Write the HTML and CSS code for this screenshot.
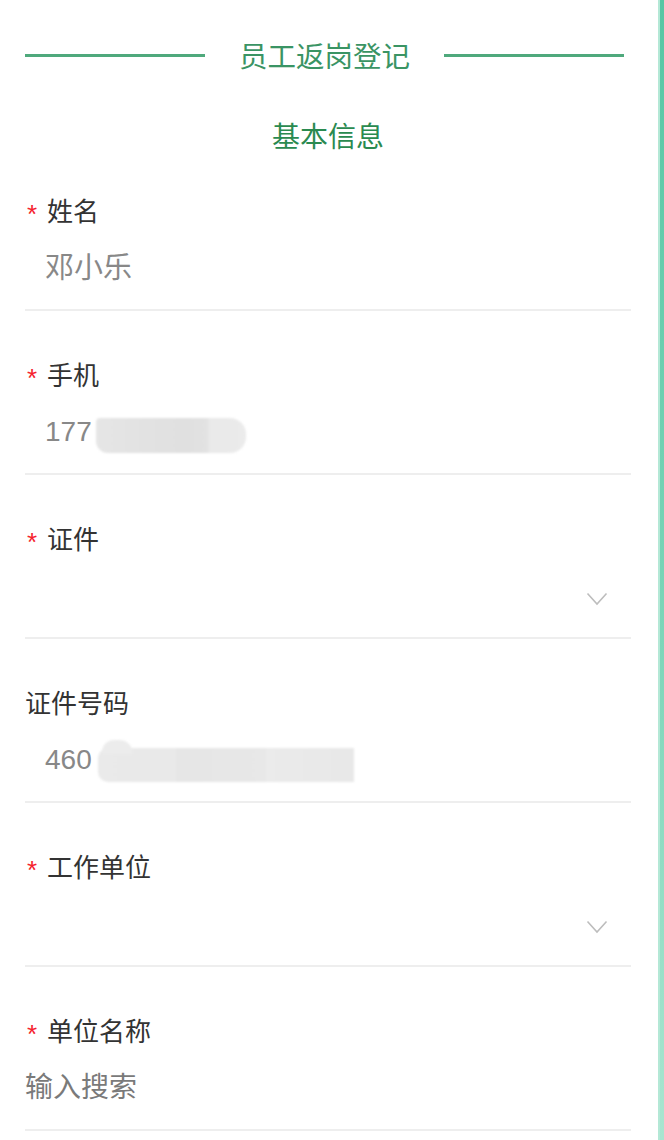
FILE: index.html
```html
<!DOCTYPE html>
<html lang="zh-CN">
<head>
<meta charset="utf-8">
<title>员工返岗登记</title>
<link rel="stylesheet" href="styles.css">
</head>
<body>
<div class="page">
  <main class="content">
    <div class="title-row">
      <span class="rule"></span>
      <h1 class="title">员工返岗登记</h1>
      <span class="rule"></span>
    </div>
    <h2 class="section">基本信息</h2>

    <div class="field field-first">
      <div class="label"><span class="req">*</span>姓名</div>
      <div class="value value-name">邓小乐</div>
    </div>

    <div class="field">
      <div class="label"><span class="req">*</span>手机</div>
      <div class="value">177<span class="mask mask-phone"></span></div>
    </div>

    <div class="field">
      <div class="label"><span class="req">*</span>证件</div>
      <div class="value select">
        <svg class="chev" width="22" height="14" viewBox="0 0 22 14"><polyline points="1.5,1.5 11,12 20.5,1.5" fill="none" stroke="#bdbdbd" stroke-width="1.6"/></svg>
      </div>
    </div>

    <div class="field">
      <div class="label">证件号码</div>
      <div class="value">460<span class="mask mask-id"><span class="mask-bump"></span></span></div>
    </div>

    <div class="field">
      <div class="label"><span class="req">*</span>工作单位</div>
      <div class="value select">
        <svg class="chev" width="22" height="14" viewBox="0 0 22 14"><polyline points="1.5,1.5 11,12 20.5,1.5" fill="none" stroke="#bdbdbd" stroke-width="1.6"/></svg>
      </div>
    </div>

    <div class="field">
      <div class="label"><span class="req">*</span>单位名称</div>
      <div class="value placeholder">输入搜索</div>
    </div>
  </main>
  <div class="edge"></div>
</div>
</body>
</html>
```

FILE: styles.css
```css
* { box-sizing: border-box; }

html, body {
  margin: 0;
  padding: 0;
  background: #ffffff;
}

body {
  font-family: "Liberation Sans", "Noto Sans CJK SC", sans-serif;
  color: #333333;
}

.page {
  display: flex;
  width: 664px;
  min-height: 1140px;
  overflow: hidden;
}

.content {
  width: 658px;
  padding: 35px 27px 0 25px;
}

.edge {
  width: 6px;
  min-height: 1140px;
  background: linear-gradient(to bottom, #57c6a4 0%, #78d3b6 50%, #a9e5d0 100%);
  border-left: 2px solid #b4e8d6;
}

.title-row {
  display: flex;
  align-items: center;
  justify-content: space-between;
  height: 40px;
  margin-right: 7px;
}

.rule {
  width: 180px;
  height: 3px;
  background: #4fa97c;
}

.title {
  margin: 0;
  font-size: 28.5px;
  line-height: 40px;
  font-weight: normal;
  color: #3a9464;
  font-family: "Noto Sans CJK SC", sans-serif;
}

.section {
  margin: 40px 0 0;
  text-align: center;
  font-size: 28px;
  line-height: 40px;
  font-weight: normal;
  color: #2a8a50;
  font-family: "Noto Sans CJK SC", sans-serif;
}

.field {
  padding: 47px 0 21px;
  border-bottom: 2px solid #eeeeee;
}

.field-first {
  padding-top: 39px;
}

.label {
  display: flex;
  align-items: flex-start;
  height: 36px;
  font-size: 26px;
  line-height: 36px;
  color: #333333;
}

.req {
  width: 22px;
  padding-left: 2px;
  margin-top: 7px;
  font-family: "Liberation Sans", sans-serif;
  font-size: 26px;
  line-height: 26px;
  height: 26px;
  color: #f5222d;
}

.value {
  display: flex;
  align-items: center;
  height: 40px;
  margin-top: 18px;
  padding-left: 20px;
  font-size: 28px;
  line-height: 40px;
  color: #888888;
}

.value-name {
  font-size: 29px;
}

.value.select {
  justify-content: flex-end;
  padding-left: 0;
  padding-right: 23px;
}

.chev {
  display: block;
  margin-top: 5px;
}

.value.placeholder {
  padding-left: 0;
  color: #7a7a7a;
}

.mask {
  display: inline-block;
  position: relative;
  background: #e3e3e3;
  filter: blur(1px);
}

.mask-phone {
  width: 150px;
  height: 35px;
  margin-left: 4px;
  margin-top: 7px;
  border-radius: 4px 16px 16px 12px;
  background: linear-gradient(to right, #e6e6e6 0%, #e3e3e3 25%, #e0e0e0 60%, #e2e2e2 74%, #eaeaea 76%, #ebebeb 100%);
}

.mask-id {
  width: 256px;
  height: 34px;
  margin-left: 6px;
  margin-top: 10px;
  border-radius: 10px 0 0 10px;
  background: linear-gradient(to right, #eaeaea 0%, #e9e9e9 30%, #e6e6e6 31%, #e8e8e8 65%, #ebebeb 66%, #e8e8e8 100%);
}

.mask-bump {
  position: absolute;
  left: 4px;
  top: -8px;
  width: 30px;
  height: 14px;
  border-radius: 12px 12px 0 0;
  background: #ececec;
}
```
